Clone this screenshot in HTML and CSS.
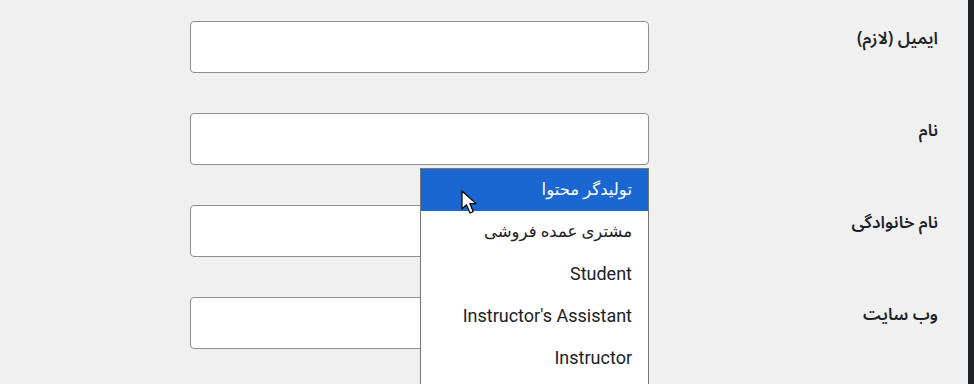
FILE: index.html
```html
<!DOCTYPE html>
<html lang="fa" dir="rtl">
<head>
    <meta charset="UTF-8">
    <meta name="viewport" content="width=device-width, initial-scale=1.0">
    <title>افزودن کاربر</title>
    <link rel="stylesheet" href="styles.css">
</head>
<body>
    <div class="wrap">
        <div class="admin-menu"></div>
        <div class="main">
            <div class="form-row">
                <label class="form-label">ایمیل (لازم)</label>
                <div class="form-field">
                    <input type="text" class="regular-text">
                </div>
            </div>
            <div class="form-row">
                <label class="form-label">نام</label>
                <div class="form-field">
                    <input type="text" class="regular-text">
                    <!-- لیست نقش کاربری باز شده -->
                    <ul class="role-menu">
                        <li class="role-item active fa">تولیدگر محتوا</li>
                        <li class="role-item fa">مشتری عمده فروشی</li>
                        <li class="role-item">Student</li>
                        <li class="role-item">Instructor's Assistant</li>
                        <li class="role-item">Instructor</li>
                    </ul>
                    <svg class="pointer" width="18" height="26" viewBox="0 0 18 26">
                        <path d="M1 1 L1 19 L5.5 14.8 L9 23 L12.2 21.6 L8.8 13.6 L15 13.6 Z" fill="#fff" stroke="#000" stroke-width="1.2" stroke-linejoin="round"/>
                    </svg>
                </div>
            </div>
            <div class="form-row">
                <label class="form-label">نام خانوادگی</label>
                <div class="form-field">
                    <input type="text" class="regular-text">
                </div>
            </div>
            <div class="form-row">
                <label class="form-label">وب سایت</label>
                <div class="form-field">
                    <input type="text" class="regular-text">
                </div>
            </div>
        </div>
    </div>
</body>
</html>
```
FILE: styles.css
```css
* {
    box-sizing: border-box;
    margin: 0;
    padding: 0;
}

body {
    font-family: "Noto Sans Arabic", "DejaVu Sans", sans-serif;
    background: #f0f0f1;
    color: #1d2327;
    overflow: hidden;
}

.wrap {
    display: flex;
    height: 384px;
}

.admin-menu {
    width: 6px;
    background: #1d2327;
}

.main {
    flex: 1;
    padding: 21px 30px 0 0;
}

.form-row {
    display: flex;
    align-items: flex-start;
    margin-bottom: 40px;
}

.form-label {
    width: 289px;
    padding-top: 6px;
    font-size: 17px;
    font-weight: 600;
    line-height: 24px;
}

.form-field {
    position: relative;
    width: 459px;
}

.regular-text {
    display: block;
    width: 100%;
    height: 52px;
    border: 1px solid #8c8f94;
    border-radius: 4px;
    background: #fff;
}

.role-menu {
    position: absolute;
    z-index: 10;
    top: 55px;
    right: 0;
    width: 229px;
    height: 240px;
    list-style: none;
    background: #fff;
    border: 1px solid #767676;
    border-bottom: none;
    font-family: Roboto, "DejaVu Sans", sans-serif;
    font-size: 18px;
    color: #202124;
}

.role-item {
    height: 42px;
    line-height: 41px;
    padding-right: 16px;
    white-space: nowrap;
}

.role-item.fa {
    font-size: 16.5px;
}

.role-item.active {
    background: #1a67d2;
    color: #fff;
}

.pointer {
    position: absolute;
    z-index: 11;
    top: 77px;
    left: 271px;
}
```
